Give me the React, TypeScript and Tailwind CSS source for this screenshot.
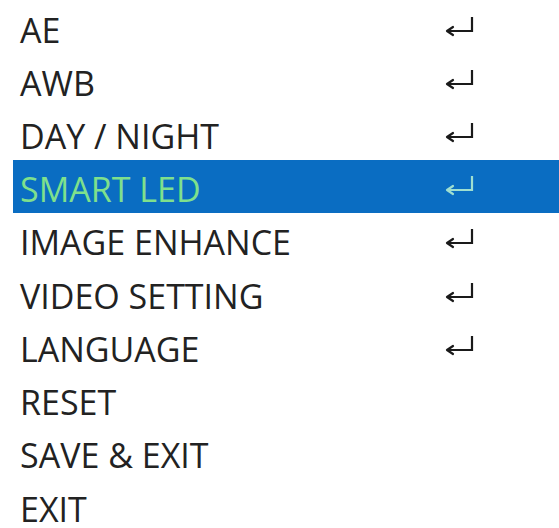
const items: { label: string; arrow: boolean }[] = [
  { label: "AE", arrow: true },
  { label: "AWB", arrow: true },
  { label: "DAY / NIGHT", arrow: true },
  { label: "SMART LED", arrow: true },
  { label: "IMAGE ENHANCE", arrow: true },
  { label: "VIDEO SETTING", arrow: true },
  { label: "LANGUAGE", arrow: true },
  { label: "RESET", arrow: false },
  { label: "SAVE & EXIT", arrow: false },
  { label: "EXIT", arrow: false },
];

function EnterArrow({ color }: { color: string }) {
  return (
    <svg width="32" height="24" viewBox="0 0 32 24" fill="none">
      <path d="M29 2 V16 H5" stroke={color} strokeWidth="2.2" />
      <path d="M4 16 L10 12 M4 16 L10 20" stroke={color} strokeWidth="2.2" strokeLinecap="round" />
    </svg>
  );
}

export default function App() {
  return (
    <div
      className="w-[559px] h-[528px] bg-white overflow-hidden"
      style={{ fontFamily: "'Open Sans', Lato, sans-serif" }}
    >
      {items.map((it, i) => {
        const active = i === 3;
        const last = i === items.length - 1;
        return (
          <div
            key={it.label}
            className={
              active
                ? "h-[53.2px] flex items-center ml-[13px] bg-[#0a6dc2] text-[#7fe08c]"
                : last
                  ? "flex items-center ml-[13px] pt-[7px] text-[#222]"
                  : "h-[53.2px] flex items-center ml-[13px] text-[#222]"
            }
          >
            <span className="w-[430px] pl-[7px] pt-[6px] text-[34px] leading-none">
              {it.label}
            </span>
            {it.arrow && <EnterArrow color={active ? "#9fdfd0" : "#1a1a1a"} />}
          </div>
        );
      })}
    </div>
  );
}
